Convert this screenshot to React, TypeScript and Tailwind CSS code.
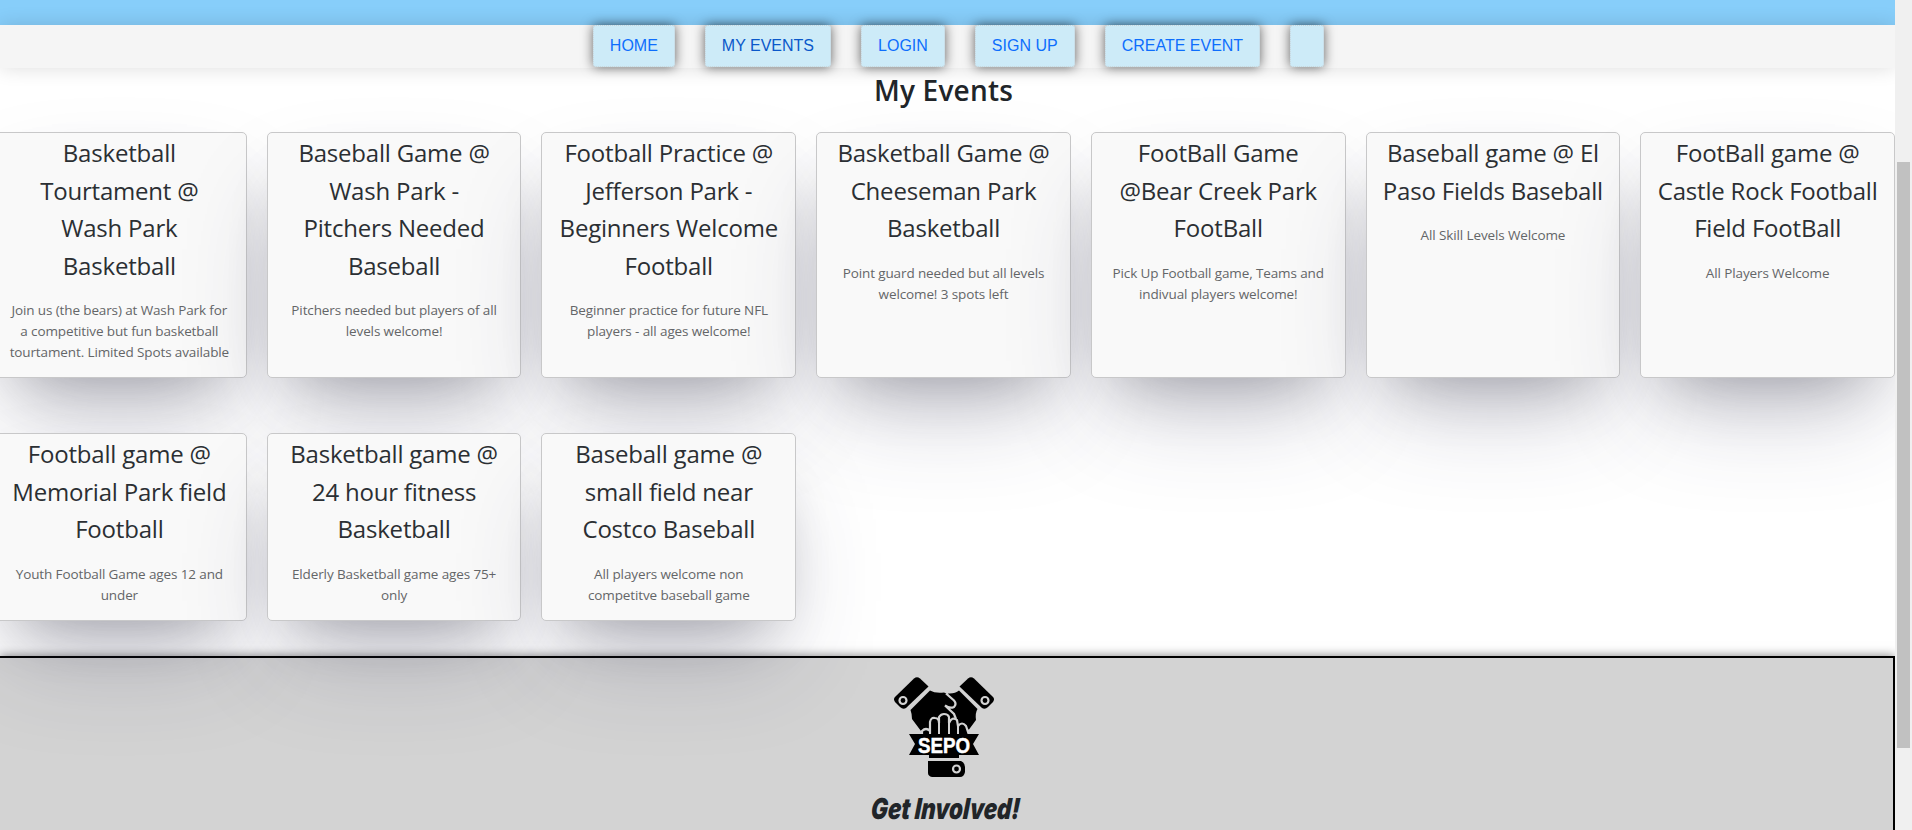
const events = [
  { title: 'Basketball\nTourtament @\nWash Park\nBasketball', text: 'Join us (the bears) at Wash Park for\na competitive but fun basketball\ntourtament. Limited Spots available' },
  { title: 'Baseball Game @\nWash Park -\nPitchers Needed\nBaseball', text: 'Pitchers needed but players of all\nlevels welcome!' },
  { title: 'Football Practice @\nJefferson Park -\nBeginners Welcome\nFootball', text: 'Beginner practice for future NFL\nplayers - all ages welcome!' },
  { title: 'Basketball Game @\nCheeseman Park\nBasketball', text: 'Point guard needed but all levels\nwelcome! 3 spots left' },
  { title: 'FootBall Game\n@Bear Creek Park\nFootBall', text: 'Pick Up Football game, Teams and\nindivual players welcome!' },
  { title: 'Baseball game @ El\nPaso Fields Baseball', text: 'All Skill Levels Welcome' },
  { title: 'FootBall game @\nCastle Rock Football\nField FootBall', text: 'All Players Welcome' },
  { title: 'Football game @\nMemorial Park field\nFootball', text: 'Youth Football Game ages 12 and\nunder' },
  { title: 'Basketball game @\n24 hour fitness\nBasketball', text: 'Elderly Basketball game ages 75+\nonly' },
  { title: 'Baseball game @\nsmall field near\nCostco Baseball', text: 'All players welcome non\ncompetitve baseball game' },
];

const links = ['HOME', 'MY EVENTS', 'LOGIN', 'SIGN UP', 'CREATE EVENT', ''];

function Logo() {
  return (
    <svg width="100" height="100" viewBox="0 0 100 100" className="block">
      <path d="M20 1.500Q23 -1 26 1.500L34.500 9.500L12 31Q9 33 6 30L1 25Q-1 22 1 20Z" fill="#000" />
      <circle cx="9" cy="23.500" r="3.500" fill="#000" stroke="#d3d3d3" strokeWidth="2.200" />
      <path d="M80 1.500Q77 -1 74 1.500L65.500 9.500L88 31Q91 33 94 30L99 25Q101 22 99 20Z" fill="#000" />
      <circle cx="91" cy="23.500" r="3.500" fill="#000" stroke="#d3d3d3" strokeWidth="2.200" />
      <path d="M16.500 33L36 13.500Q41 16.500 50 15.500Q55 17 57 22L61 28L70 40V54H27L18 42Q18 37 16.500 33Z" fill="#000" />
      <path d="M54 16.500Q61 17 65 13.500L83.500 32Q81 36 82 43L75 52.500H62L57 32Z" fill="#000" />
      <path d="M52 16.500Q56 20 60 23.500Q63 27 60 30Q56 32 51 28.500L60 37L62 42" fill="none" stroke="#d3d3d3" strokeWidth="2.200" />
      <path d="M28 58V54Q32 50 36 54V45Q37 40 41 41Q45 41 45 46V40Q47 37 50 37Q54 37 55 40V46Q58 39 63 43L64 49Q68 44 72 49L75 58V81H34Z" fill="#000" stroke="#d3d3d3" strokeWidth="2.200" />
      <path d="M45 44V57M55 44V57M64 48V57M36 53V57" stroke="#d3d3d3" strokeWidth="2" />
      <path d="M15 57H85L79 67L85 78H15L21 67Z" fill="#000" />
      <path d="M33 78H77V83H33Z" fill="#d3d3d3" />
      <path d="M35 77H65V81H35Z" fill="#000" />
      <path d="M34 84H67Q71 86 71 90V95Q70 100 66 100H38Q34 99 34 96Z" fill="#000" />
      <circle cx="62.500" cy="92" r="3.500" fill="#000" stroke="#d3d3d3" strokeWidth="2.200" />
      <text x="50" y="75.500" textAnchor="middle" textLength="52" lengthAdjust="spacingAndGlyphs" fill="#fff" stroke="#fff" strokeWidth="0.500" className="font-['Liberation_Sans',sans-serif] text-[22.500px] font-bold">SEPO</text>
    </svg>
  );
}

export default function App() {
  return (
    <div className="flex h-[830px] w-full overflow-hidden bg-white font-['Open_Sans',sans-serif] text-[#212529]">
      <div className="h-full w-[1895px] shrink-0 overflow-hidden">
        <div className="h-[25px] bg-[#87cefa]" />
        <nav className="flex h-[43px] justify-center gap-[30px] bg-[#f5f5f5] pl-[22px] font-['Liberation_Sans',sans-serif] text-base shadow-[0_0_20px_rgba(0,0,0,0.14)]">
          {links.map((l) => (
            <a
              key={l}
              className={`h-[42px] rounded-[3px] border border-dotted border-[#c8d4d9] bg-[#cdebf8] px-4 py-2 leading-6 shadow-[0_0_12px_rgba(0,0,0,0.6)] ${l === 'MY EVENTS' ? 'text-[#0a58ca]' : 'text-[#0d6efd]'}`}
            >
              {l}
            </a>
          ))}
        </nav>
        <h1 className="mt-[5px] h-[34px] pr-[8px] text-center text-[28px] leading-[34px] font-semibold tracking-[0.2px]">My Events</h1>
        <div className="-ml-[8px] mt-[25px] grid grid-cols-7 grid-rows-[246px_188px] gap-x-5 gap-y-[55px]">
          {events.map((e) => (
            <article
              key={e.title}
              className="relative rounded-[5px] border border-[#c8c8c9] bg-[#f9f9f9] text-center whitespace-pre shadow-[0_50px_100px_-20px_rgba(50,50,93,0.25),0_30px_60px_-30px_rgba(0,0,0,0.3)]"
            >
              <h2 className="mt-px text-[24px] leading-[37.500px] tracking-[-0.2px] text-[#2b2f33]">{e.title}</h2>
              <p className="mt-[16px] text-[13.500px] leading-[21px] tracking-[-0.12px] text-[#646668]">{e.text}</p>
            </article>
          ))}
        </div>
        <footer className="mt-[35px] flex h-[300px] flex-col items-center border-2 border-l-0 border-black bg-[#d3d3d3] pr-[5px] pt-[19px] shadow-[0_0_10px_rgba(0,0,0,0.5)]">
          <Logo />
          <h3 className="mt-[14px] ml-[4px] scale-x-[0.770] -skew-x-[5deg] font-['Inter',sans-serif] text-[29px] leading-[36px] font-black whitespace-nowrap italic">Get Involved!</h3>
        </footer>
      </div>
      <div className="h-full w-[17px] shrink-0 bg-[#f0f0f0] pt-[162px]">
        <div className="ml-[2px] h-[586px] w-[13px] bg-[#c1c1c1]" />
      </div>
    </div>
  );
}
